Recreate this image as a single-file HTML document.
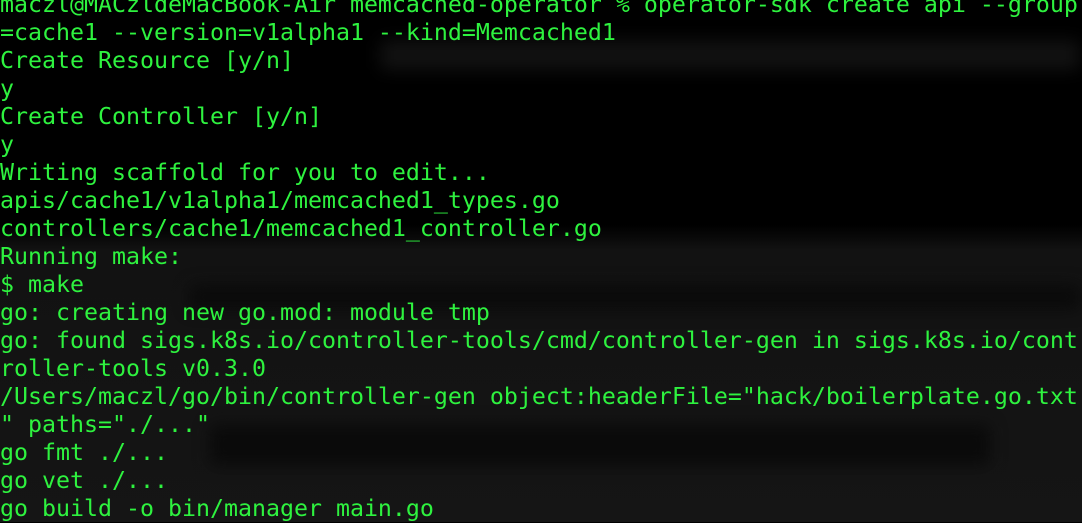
<!DOCTYPE html>
<html><head><meta charset="utf-8"><style>
html,body{margin:0;padding:0;width:1082px;height:522px;overflow:hidden;background:#000;}
.bg{position:absolute;left:0;top:0;width:1082px;height:522px;background:linear-gradient(to bottom,#000 0,#000 225px,#121212 250px,#151515 522px);}
.blob{position:absolute;background:#0a0a0a;filter:blur(8px);border-radius:6px;}
pre{position:absolute;left:0;top:-9px;margin:0;font-family:"DejaVu Sans Mono","Liberation Mono",monospace;font-size:23.25px;line-height:28px;color:#2ef23f;white-space:pre;}
</style></head><body>
<div class="bg"></div>
<div class="blob" style="left:380px;top:40px;width:700px;height:30px;background:#111"></div>
<div class="blob" style="left:190px;top:285px;width:890px;height:24px;"></div>
<div class="blob" style="left:210px;top:425px;width:780px;height:40px;"></div>
<pre>maczl@MACzldeMacBook-Air memcached-operator % operator-sdk create api --group.
=cache1 --version=v1alpha1 --kind=Memcached1
Create Resource [y/n]
y
Create Controller [y/n]
y
Writing scaffold for you to edit...
apis/cache1/v1alpha1/memcached1_types.go
controllers/cache1/memcached1_controller.go
Running make:
$ make
go: creating new go.mod: module tmp
go: found sigs.k8s.io/controller-tools/cmd/controller-gen in sigs.k8s.io/cont
roller-tools v0.3.0
/Users/maczl/go/bin/controller-gen object:headerFile="hack/boilerplate.go.txt
" paths="./..."
go fmt ./...
go vet ./...
go build -o bin/manager main.go</pre>
</body></html>
